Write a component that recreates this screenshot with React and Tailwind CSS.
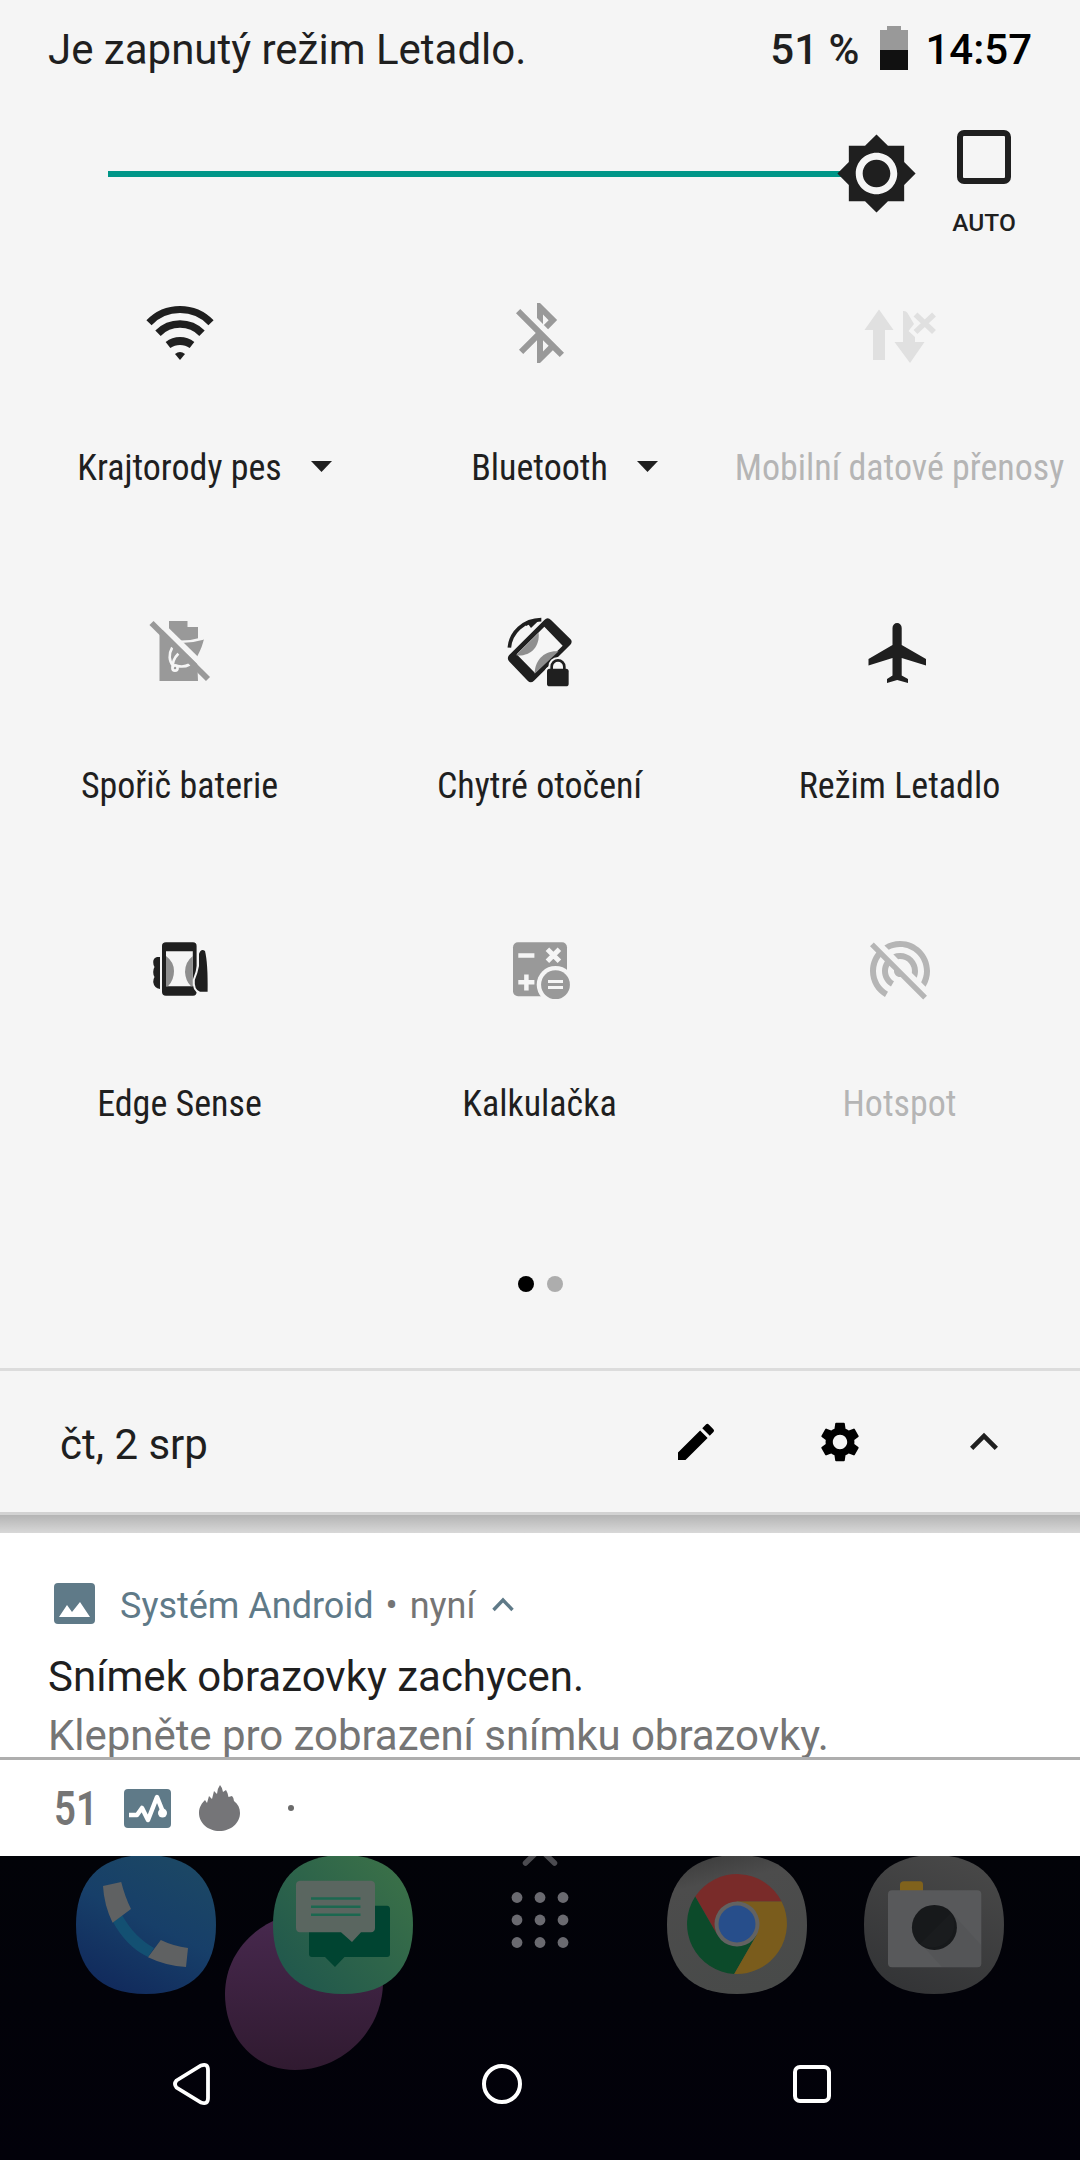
import {
  MdBluetoothDisabled,
  MdBrightness7,
  MdEdit,
  MdExpandLess,
  MdPortableWifiOff,
  MdSettings,
} from 'react-icons/md';

const SQUIRCLE = 'M70 0C118 0 140 28 140 70S118 139 70 139 0 112 0 70 22 0 70 0z';

function TileSvg({ children, viewBox = '0 0 120 100' }) {
  return (
    <svg className="h-[100px] w-[120px]" viewBox={viewBox} fill="currentColor" aria-hidden="true">
      {children}
    </svg>
  );
}

function WifiIcon() {
  return (
    <TileSvg>
      <g fill="none" stroke="currentColor">
        <path d="M29 40.7A43 43 0 0 1 91 40.7" strokeWidth="7.2" />
        <path d="M38 51.2A31 31 0 0 1 82 51.2" strokeWidth="7.6" />
        <path d="M48 63A20 20 0 0 1 72 63" strokeWidth="7.8" />
      </g>
      <path d="M55 72Q60 68 65 72L60 78z" />
    </TileSvg>
  );
}

function BluetoothIcon() {
  return (
    <div className="flex h-[100px] w-[120px] justify-center pt-[15px]">
      <MdBluetoothDisabled className="h-[72px] w-[72px]" />
    </div>
  );
}

function MobileDataIcon() {
  return (
    <TileSvg>
      <path d="M39 27.5L24.5 48H33V78H45V48H53.5z" />
      <path d="M63 29Q66 28.5 67.5 31L74 42L68.5 49L75 55V60H84.5L70 81L54.5 60H63z" />
      <path d="M75.5 32.5L94 50M94 32.5L75.5 50" fill="none" stroke="currentColor" strokeWidth="5.6" />
    </TileSvg>
  );
}

function BatterySaverIcon() {
  return (
    <TileSvg>
      <path d="M39.5 30H49V21H67.5V27H78V40L84 39C82 47 80 51 77 57L78 81H39.5z" />
      <g fill="none" stroke="#f5f5f5" strokeWidth="2.6" strokeLinecap="round">
        <path d="M61 41.8C68 41.6 76 40.5 83 38.4" />
        <path d="M52 48C48.5 54 49 61 53 65.5" />
        <path d="M58.5 53.5C54 58 52.5 63 53 67" />
        <circle cx="55" cy="68" r="2.6" />
        <path d="M57.5 66C62 67 66 66.5 69.5 64.5" />
      </g>
      <path d="M37 20.5L92 74.5" stroke="#f5f5f5" strokeWidth="5.8" />
      <path d="M31.5 23L88 79" stroke="currentColor" strokeWidth="5.8" />
    </TileSvg>
  );
}

function RotationIcon() {
  return (
    <TileSvg viewBox="0 0 360 300">
      <path d="M88 143C92 98 130 60 184 59" fill="none" stroke="currentColor" strokeWidth="11" />
      <path d="M184 54L153 84L146 74L138 78L138 66z" />
      <path
        fillRule="evenodd"
        d="M193 60Q203 50 213 60L271 117Q279 125 271 134L162 242Q152 251 143 242L87 184Q80 175 87 166zM193 80L110 163L165 219L248 137z"
      />
      <path d="M176 98C180 142 150 170 108 166z" fill="#8e8e8e" />
      <path d="M164 221C164 182 192 150 236 154z" fill="#8e8e8e" />
      <g stroke="#f5f5f5" strokeWidth="12">
        <rect x="201" y="206" width="65" height="53" rx="8" fill="#f5f5f5" />
        <path d="M215 208V200a19 19 0 0 1 38 0V208" fill="#f5f5f5" strokeWidth="20" />
      </g>
      <rect x="201" y="206" width="65" height="53" rx="8" />
      <path d="M215 208V200a19 19 0 0 1 38 0V208" fill="none" stroke="currentColor" strokeWidth="8" />
    </TileSvg>
  );
}

function AirplaneIcon() {
  return (
    <TileSvg>
      <path d="M52.5 28a4.6 5 0 0 1 9.2 0V45L86 59V65.5L61.7 58V75.5L68 79V83L57.2 80L47 83V79L52.5 75.5V58L28.5 65.5V59L52.5 45z" />
    </TileSvg>
  );
}

function EdgeSenseIcon() {
  return (
    <TileSvg>
      <path
        fillRule="evenodd"
        d="M46 24.3H73Q76.6 24.3 76.6 28V74Q76.6 77.7 73 77.7H46Q42 77.7 42 74V28Q42 24.3 46 24.3zM46 33.3V68.3H72.8V33.3z"
      />
      <path d="M46 38Q54 44 54 53Q54 62 48 68.3H46zM72.8 38Q65 44 65 54Q65.5 63 71 68.3H72.8z" fill="#8e8e8e" />
      <path d="M40 39H37Q33.2 40 33.2 44Q33.2 47 34.5 49Q33.2 51 33.2 54Q33.2 57 34.5 59Q33.2 61 33.2 64Q34 70 40 71z" />
      <path
        d="M79 36Q81 30 85 33Q88 45 87.6 73.7H80Q74 72 74.8 62Q78 54 79 48z"
        stroke="#f5f5f5"
        strokeWidth="4"
        paintOrder="stroke"
      />
    </TileSvg>
  );
}

function CalculatorIcon() {
  return (
    <TileSvg>
      <rect x="33" y="24.3" width="54" height="54" rx="5" />
      <g stroke="#f5f5f5" fill="none">
        <path d="M38.3 37.5H54.4M38.3 64.3H54.4M46.4 56.5V72.5" strokeWidth="4.5" />
        <path d="M67.4 31.3L79.4 43.3M79.4 31.3L67.4 43.3" strokeWidth="5" />
      </g>
      <circle cx="75.5" cy="66.7" r="18.8" fill="#f5f5f5" />
      <circle cx="75.5" cy="66.7" r="14.4" />
      <path d="M68 63.5H83M68 69.5H83" stroke="#f5f5f5" strokeWidth="3" />
    </TileSvg>
  );
}

function HotspotIcon() {
  return (
    <div className="flex h-[100px] w-[120px] justify-center pt-[17px]">
      <MdPortableWifiOff className="h-[72px] w-[72px]" />
    </div>
  );
}

const tiles = [
  { label: 'Krajtorody pes', Icon: WifiIcon, state: 'on', menu: true },
  { label: 'Bluetooth', Icon: BluetoothIcon, state: 'off', menu: true },
  { label: 'Mobilní datové přenosy', Icon: MobileDataIcon, state: 'unavailable' },
  { label: 'Spořič baterie', Icon: BatterySaverIcon, state: 'off' },
  { label: 'Chytré otočení', Icon: RotationIcon, state: 'on' },
  { label: 'Režim Letadlo', Icon: AirplaneIcon, state: 'on' },
  { label: 'Edge Sense', Icon: EdgeSenseIcon, state: 'on' },
  { label: 'Kalkulačka', Icon: CalculatorIcon, state: 'off' },
  { label: 'Hotspot', Icon: HotspotIcon, state: 'disabled' },
];

const iconColors = {
  on: 'text-[#1f1f1f]',
  off: 'text-[#999999]',
  disabled: 'text-[#b5b5b5]',
  unavailable: 'text-[#e0e0e0]',
};

const labelColors = {
  on: 'text-[#1f1f1f]',
  off: 'text-[#1f1f1f]',
  disabled: 'text-[#b5b5b5]',
  unavailable: 'text-[#b5b5b5]',
};

function Tile({ label, Icon, state, menu }) {
  return (
    <button type="button" className="flex h-[318px] flex-col items-center">
      <span className={iconColors[state]}>
        <Icon />
      </span>
      <span
        className={`relative mt-[65px] mr-px font-['Roboto_Condensed','Roboto',sans-serif] text-[36px] leading-[42px] whitespace-nowrap ${labelColors[state]}`}
      >
        {label}
        {menu && (
          <svg className="absolute top-[14px] left-full ml-[29px] h-[11px] w-[21px]" viewBox="0 0 21 11" fill="currentColor">
            <path d="M0 0H21L10.5 11z" />
          </svg>
        )}
      </span>
    </button>
  );
}

function StatusHeader() {
  return (
    <header className="flex h-[100px] items-start pt-[26px] pr-12 pl-12 text-[42px] leading-[48px]">
      <span className="flex-1 text-[#1f1f1f]">Je zapnutý režim Letadlo.</span>
      <span className="font-medium text-[#1f1f1f]">51 %</span>
      <svg className="mr-[17px] ml-[21px] h-11 w-7" viewBox="0 0 28 44">
        <path d="M7 0H21V4H28V24H0V4H7z" fill="#999" />
        <path d="M0 24H28V44H0z" fill="#111" />
      </svg>
      <span className="font-medium text-black">14:57</span>
    </header>
  );
}

function BrightnessRow() {
  return (
    <div className="flex h-[182px] items-start">
      <div className="mt-8 ml-[108px] flex h-[83px] flex-1 items-center">
        <div className="h-1.5 flex-1 bg-[#009688]"></div>
        <div className="-ml-5 rounded-full bg-[radial-gradient(circle,#f5f5f5_22px,transparent_23px)]">
          <MdBrightness7 className="h-[83px] w-[83px] text-[#1f1f1f]" />
        </div>
      </div>
      <div className="mt-[30px] mr-16 ml-[34px] flex w-16 flex-col items-center">
        <div className="h-[54px] w-[54px] rounded-[7px] border-[6px] border-[#1f1f1f]"></div>
        <span className="mt-[25px] text-[24.5px] leading-[28px] font-medium text-[#1f1f1f]">AUTO</span>
      </div>
    </div>
  );
}

function QuickSettingsFooter() {
  return (
    <div className="flex h-[144px] items-center border-t-[3px] border-[#dcdcdc] pr-[68px] pl-[60px]">
      <span className="flex-1 pt-1.5 text-[42px] leading-[48px] text-[#1f1f1f]">čt, 2 srp</span>
      <MdEdit className="mt-px h-12 w-12" />
      <MdSettings className="mt-px ml-24 h-12 w-12" />
      <MdExpandLess className="ml-[92px] h-14 w-14 text-[#1f1f1f]" />
    </div>
  );
}

function Notification() {
  return (
    <section className="h-[227px] overflow-hidden border-b-[3px] border-[#aeaeae] bg-white pl-12">
      <div className="mt-[49px] flex h-[42px] items-center text-[36px] leading-[42px]">
        <svg className="ml-[6px] h-[41px] w-[41px]" viewBox="0 0 41 41">
          <rect width="41" height="41" rx="4" fill="#5f7a88" />
          <path d="M5 34L13 22L18 29L26 19L36 34z" fill="#fff" />
        </svg>
        <span className="ml-[25px] pt-1.5 text-[#5f7a88]">Systém Android</span>
        <span className="mx-3 pt-1.5 text-[#757575]">•</span>
        <span className="pt-1.5 text-[#757575]">nyní</span>
        <svg className="mt-[3px] ml-[17px] h-[15px] w-[22px]" viewBox="0 0 22 15" fill="none">
          <path d="M1.5 13L11 3L20.5 13" stroke="#5f7a88" strokeWidth="3.4" />
        </svg>
      </div>
      <p className="mt-[29px] text-[42px] leading-[48px] text-[#1f1f1f]">Snímek obrazovky zachycen.</p>
      <p className="mt-[11px] text-[42px] leading-[48px] tracking-[-0.04px] text-[#757575]">
        Klepněte pro zobrazení snímku obrazovky.
      </p>
    </section>
  );
}

function NotificationShelf() {
  return (
    <div className="flex h-24 items-center bg-white pl-[54px]">
      <span className="w-[70px] pt-0.5">
        <span className="inline-block origin-left scale-x-[0.8] text-[48px] leading-[56px] font-semibold text-[#757575]">51</span>
      </span>
      <svg className="h-[39px] w-[47px]" viewBox="0 0 47 39">
        <rect width="47" height="39" rx="4" fill="#5f7a88" />
        <path d="M5 26H13L18 19L24 31L33 8L39 23" fill="none" stroke="#fff" strokeWidth="4.5" strokeLinejoin="round" />
        <circle cx="38.500" cy="24" r="4.500" fill="#fff" />
      </svg>
      <svg className="ml-[28px] h-[46px] w-[41px]" viewBox="0 0 41 46" fill="#757578">
        <path d="M21 0Q23 2 24 7L27 5Q29 8 29.500 12L33 11Q35 13 35 16C39 19 41 23 41 28C41 38 32 46 20.500 46S0 38 0 28C0 22 3 18 6 15L8 18L10 11L13 14L15 6L18 9Q18 4 21 0z" />
      </svg>
      <span className="ml-[48px] h-1.5 w-1.5 rounded-full bg-[#6b6b6b]"></span>
    </div>
  );
}

function PhoneApp() {
  return (
    <svg className="h-[140px] w-[140px]" viewBox="0 0 140 140">
      <defs>
        <linearGradient id="phone" x1="0.8" y1="0" x2="0.3" y2="1">
          <stop offset="0" stopColor="#1c4864" />
          <stop offset="0.5" stopColor="#173f69" />
          <stop offset="1" stopColor="#112a5c" />
        </linearGradient>
      </defs>
      <path d={SQUIRCLE} fill="url(#phone)" />
      <path d="M37 67L46 60C55 76 66 86 78 93L72 102C57 95 45 82 37 67z" fill="#135072" />
      <path d="M27 31L45.200 27Q49 42 55 54L36.600 67.700Q28 50 27 31z" fill="#5f6162" />
      <path d="M84.800 85Q97 91 112 93L110 112Q90 111 72 102.300z" fill="#5f6162" />
    </svg>
  );
}

function MessagesApp() {
  return (
    <svg className="h-[140px] w-[140px]" viewBox="0 0 140 140">
      <defs>
        <linearGradient id="messages" x1="0.9" y1="0.1" x2="0.1" y2="0.8">
          <stop offset="0" stopColor="#3a7048" />
          <stop offset="1" stopColor="#22594c" />
        </linearGradient>
      </defs>
      <path d={SQUIRCLE} fill="url(#messages)" />
      <path d="M39 50.700H114Q117 51 117 54V99Q117 102 114 102H71.500L62 112L52 102H39Q36 102 36 99V54Q36 51 39 50.700z" fill="#004431" />
      <path d="M27 25.700H98Q102 26 102 30V73Q102 77 98 77.300H88L79 87L68 77.300H27Q23 77 23 73V30Q23 26 27 25.700z" fill="#5a6660" />
      <path d="M38 43.500H87.500M38 51.700H87.500M38 59.700H87.500" stroke="#1c6850" strokeWidth="2.6" />
    </svg>
  );
}

function ChromeApp() {
  return (
    <svg className="h-[140px] w-[140px]" viewBox="0 0 140 140">
      <defs>
        <linearGradient id="plate" x1="0.3" y1="0" x2="0.5" y2="1">
          <stop offset="0" stopColor="#3e3e3e" />
          <stop offset="0.2" stopColor="#4c4c4c" />
          <stop offset="1" stopColor="#484a49" />
        </linearGradient>
      </defs>
      <path d={SQUIRCLE} fill="url(#plate)" />
      <g transform="translate(70 69)">
        <path d="M44.600 -22.500A50 50 0 0 0 -41.800 -27.400L-19.500 11.250L0 0V-22.500z" fill="#792b29" />
        <path d="M-41.800 -27.400A50 50 0 0 0 -2.800 49.900L19.500 11.250L0 0L-19.500 11.250z" fill="#0c4a2a" />
        <path d="M-2.800 49.900A50 50 0 0 0 44.600 -22.500H0V0L19.500 11.250z" fill="#7a5c1c" />
        <circle r="22.500" fill="#626262" />
        <circle r="18.500" fill="#274e8b" />
      </g>
    </svg>
  );
}

function CameraApp() {
  return (
    <svg className="h-[140px] w-[140px]" viewBox="0 0 140 140">
      <defs>
        <linearGradient id="camera" x1="0.7" y1="0" x2="0.3" y2="1">
          <stop offset="0" stopColor="#484848" />
          <stop offset="1" stopColor="#333436" />
        </linearGradient>
      </defs>
      <path d={SQUIRCLE} fill="url(#camera)" />
      <path d="M40 26.300H56Q59 26.300 59 30V36H36V30Q36 26.300 40 26.300z" fill="#80621c" />
      <rect x="24" y="35.300" width="93.300" height="77" rx="4" fill="#58595b" />
      <path d="M86 56L117 90V108Q117 112 113 112H78L58 90z" fill="#545557" />
      <circle cx="70.400" cy="72.400" r="22.500" fill="#17191b" />
      <path d="M56 89L72 73L87 58A22.500 22.500 0 0 1 56 89z" fill="#1a1c1e" />
    </svg>
  );
}

function AllAppsButton() {
  return (
    <svg className="h-[140px] w-[140px]" viewBox="0 0 140 140" fill="#6a6a70">
      <path d="M55.500 8L70 -6L84.500 8" fill="none" stroke="#4b4b50" strokeWidth="5.500" strokeLinecap="round" />
      {[42.5, 65, 87.5].map((cy) =>
        [47, 70, 93].map((cx) => <circle key={`${cx}-${cy}`} cx={cx} cy={cy} r="5.400" />)
      )}
    </svg>
  );
}

function HomeScreen() {
  return (
    <div className="relative h-[304px] overflow-hidden bg-linear-to-b from-[#020308] to-[#02010a]">
      {/* Wallpaper blob */}
      <svg className="absolute top-[56px] left-[225px] h-[158px] w-[158px]" viewBox="0 0 158 158">
        <defs>
          <linearGradient id="blob" x1="0.5" y1="0" x2="0.5" y2="1">
            <stop offset="0" stopColor="#48294f" />
            <stop offset="1" stopColor="#301a30" />
          </linearGradient>
        </defs>
        <path d="M88 0C130 0 158 30 158 70C158 118 118 158 70 158C28 158 0 124 0 82C0 36 40 0 88 0z" fill="url(#blob)" />
      </svg>
      <div className="relative -mt-px flex justify-between px-[76px]">
        <PhoneApp />
        <MessagesApp />
        <AllAppsButton />
        <ChromeApp />
        <CameraApp />
      </div>
      <nav className="relative mt-[67px] flex items-center pl-[172px]">
        <svg className="h-[44px] w-[40px]" viewBox="0 0 40 44" fill="none">
          <path d="M4.500 18.500L29 3.500Q36 1 36 8V36Q36 43 29 40.500L4.500 25.500Q1.500 22 4.500 18.500z" stroke="#fff" strokeWidth="3.800" />
        </svg>
        <span className="ml-[270px] h-10 w-10 rounded-full border-4 border-white"></span>
        <span className="ml-[271px] h-[38px] w-[38px] rounded-[7px] border-4 border-white"></span>
      </nav>
    </div>
  );
}

export default function App() {
  return (
    <div className="flex h-[2160px] w-[1080px] flex-col overflow-hidden bg-[#f5f5f5] font-['Roboto',sans-serif]">
      <StatusHeader />
      <BrightnessRow />
      <div className="grid grid-cols-3">
        {tiles.map((tile) => (
          <Tile key={tile.label} {...tile} />
        ))}
      </div>
      <div className="flex h-[132px] items-start justify-center gap-[13px] pt-10">
        <span className="h-4 w-4 rounded-full bg-black"></span>
        <span className="h-4 w-4 rounded-full bg-[#adadad]"></span>
      </div>
      <QuickSettingsFooter />
      <div className="h-[21px] border-t-[3px] border-[#d2d2d2] bg-linear-to-b from-[#b4b4b4] to-[#d8d8d8]"></div>
      <Notification />
      <NotificationShelf />
      <HomeScreen />
    </div>
  );
}
